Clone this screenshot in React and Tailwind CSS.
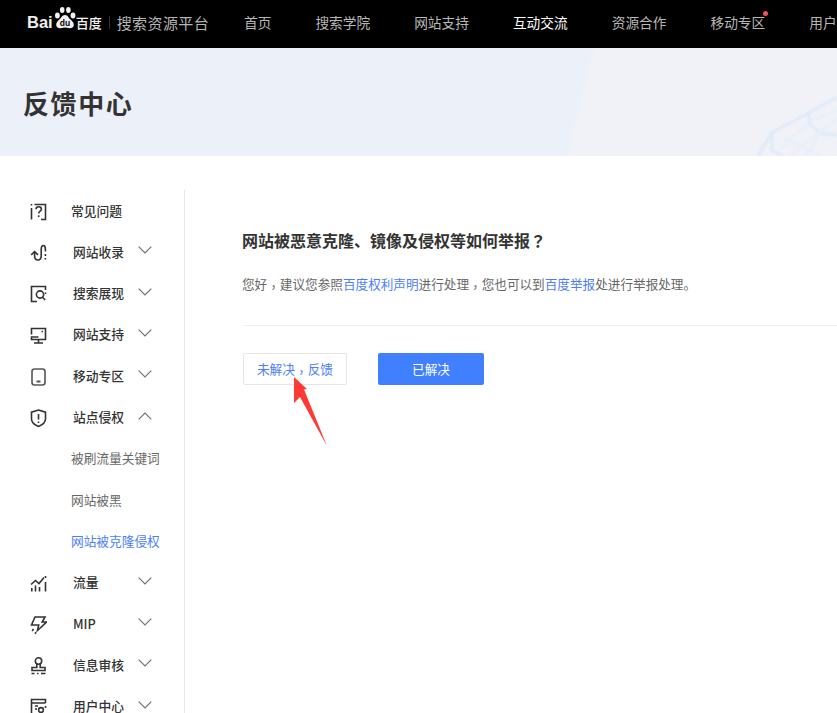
import React from "react";

const Chevron = ({ up }) => (
  <svg width="14" height="8" viewBox="0 0 14 8" fill="none" stroke="#6b7280" strokeWidth="1.2" className="block">
    {up ? <path d="M0.7 7.3 7 1l6.3 6.3" /> : <path d="M0.7 0.7 7 7l6.3-6.3" />}
  </svg>
);

const icons = {
  help: (
    <>
      <path d="M1.5 1v1.6M1.5 5v11.5M4.5 1.5h11v15H11" />
      <path d="M6 6.2c0-3.2 5.4-3.2 5.4 0 0 2-2.7 2-2.7 4.3" />
      <path d="M8.7 12.3v1.8" />
    </>
  ),
  link: (
    <>
      <path d="M1.2 10.8 4.6 7.6 8 10.8" />
      <path d="M4.6 8.2v3.6c0 5.6 6.6 5.6 6.6 0V5c0-4.6 4.2-4.6 4.2 0v2.6" />
      <path d="M15.4 10v2M15.4 14v1.5" />
    </>
  ),
  search: (
    <>
      <path d="M15.5 5V1.5H1.5v15H7" />
      <circle cx="10" cy="9.5" r="3.6" />
      <path d="m12.5 12.2 2.7 2.8M15.5 7.5v1.5" />
    </>
  ),
  monitor: (
    <>
      <path d="M1.5 7.5V1.5h14v11h-14V10h7" />
      <path d="M4 16h9M8.5 12.5V16M11.5 4.5h1.5" />
    </>
  ),
  phone: (
    <>
      <rect x="2" y="1" width="13" height="16" rx="2.5" stroke="#555" />
      <path d="M6.5 13.5h4" strokeWidth="2" stroke="#555" />
    </>
  ),
  shield: (
    <>
      <path d="M8.5 1 15.5 3.2V10c0 3.5-3.5 6-7 7.5-3.5-1.5-7-4-7-7.5V3.2z" />
      <path d="M8.5 5v5.5M8.5 12.5v1.5" />
    </>
  ),
  chart: (
    <>
      <path d="M1 10.5 5.5 6.5l3.5 3L14 3.5" />
      <path d="M1.8 14v3.5M5.5 11.5v6M9.5 13v4.5M15.5 8v9.5M15.5 2v2" />
    </>
  ),
  bolt: (
    <>
      <path d="M5 1h10l-2.8 5H16.5L7.5 14.5l1.2-5.5H1.5z" />
      <path d="M3.5 13 2.2 15M6 16.3l-1 1.5" />
    </>
  ),
  stamp: (
    <>
      <circle cx="8.5" cy="4" r="3.2" />
      <path d="M6.8 7v3.5H2v3h13v-3h-4.8V7" />
      <path d="M1.5 16.5h3M7 16.5h1.5M11 16.5h4.5" />
    </>
  ),
  user: (
    <>
      <path d="M1.5 17V1.5h14V5M1.5 5h14M5 8h3M5 11h2" />
      <circle cx="11" cy="12" r="2.4" />
      <path d="M15.5 8v2M7 16.5h1" />
    </>
  ),
};

const Icon = ({ name }) => (
  <svg width="17" height="19" viewBox="0 0 17 19" fill="none" stroke="#333" strokeWidth="1.6" className="block shrink-0">
    {icons[name]}
  </svg>
);

const Item = ({ icon, label, up, plain }) => (
  <div className="flex h-[41.3px] items-center">
    <span className="flex w-[30px] shrink-0 translate-y-[2px] justify-start">
      <Icon name={icon} />
    </span>
    <span className={`${plain ? "ml-[11px]" : "ml-[13px]"} w-[59px] shrink-0 text-[12.75px] font-medium text-[#333]`}>{label}</span>
    {!plain && (
      <span className="ml-[6px] -translate-y-[1px]">
        <Chevron up={up} />
      </span>
    )}
  </div>
);

const SubItem = ({ label, active }) => (
  <div className={`flex h-[41.3px] items-center pl-[41px] text-[12.7px] ${active ? "text-[#4d7ef7]" : "text-[#666]"}`}>{label}</div>
);

const Paw = () => (
  <svg width="24" height="24" viewBox="0 0 24 24" className="block shrink-0" fill="#f2f2f2">
    <ellipse cx="4.4" cy="9.5" rx="2.4" ry="2.9" />
    <ellipse cx="9.2" cy="4" rx="2.3" ry="3" />
    <ellipse cx="15.4" cy="4" rx="2.3" ry="3" />
    <ellipse cx="20" cy="9.5" rx="2.4" ry="2.9" />
    <path d="M12 9c-3 0-3.8 3-5.6 4.6C4.4 15.4 3 17 3.2 19c.2 2.5 2.6 3.6 4.6 3.2 1.6-.3 2.8-.7 4.2-.7s2.7.5 4.3.7c2.2.3 4.4-.9 4.5-3.3.1-2-1.4-3.6-3.4-5.3C15.6 12 15 9 12 9z" />
    <text x="12" y="20" textAnchor="middle" fontSize="8.5" fontWeight="700" fontFamily="Liberation Sans, sans-serif" fill="#000">du</text>
  </svg>
);

const nav = ["首页", "搜索学院", "网站支持", "互动交流", "资源合作", "移动专区", "用户中心"];

const Q = ({ children }) => <span className="font-['Noto_Sans_CJK_TC']">{children}</span>;
const Comma = () => <span className="inline-block translate-y-[3px] font-['Noto_Sans_CJK_TC']">，</span>;

export default function App() {
  return (
    <div
      className="h-[713px] w-[837px] overflow-hidden bg-white"
      style={{ fontFamily: '"Noto Sans CJK SC", "Liberation Sans", sans-serif' }}
    >
      <header className="flex h-12 items-center bg-black pb-[4px] pl-[27px]">
        <div className="flex w-[217px] shrink-0 items-center">
          <span className="font-['Liberation_Sans'] text-[16.5px] leading-none font-bold text-[#eeeeee]">Bai</span>
          <span className="-mt-[8px]">
            <Paw />
          </span>
          <span className="-ml-px text-[13px] leading-none font-medium text-[#f2f2f2]">百度</span>
          <span className="mx-[7px] h-[13px] w-px bg-[#333]" />
          <span className="text-[15px] leading-none tracking-[0.4px] text-[#b5b5b5]">搜索资源平台</span>
        </div>
        <nav className="flex gap-[44px] text-[13.7px] whitespace-nowrap">
          {nav.map((n) => (
            <a key={n} className={`relative ${n === "互动交流" ? "text-white" : "text-[#b8b8b8]"}`}>
              {n}
              {n === "移动专区" && <span className="absolute top-[-1px] right-[-3px] size-[5px] rounded-full bg-[#f55353]" />}
            </a>
          ))}
        </nav>
      </header>

      <section className="relative flex h-[108px] items-center overflow-hidden bg-[#ecf0f8] pl-[23px]">
        <svg className="absolute inset-0" width="837" height="108" viewBox="0 0 837 108" fill="none">
          <polygon points="594,0 837,0 837,108 567,108" fill="#f0f2f8" />
          <g className="blur-[1px]">
            <g stroke="#dce8f9" strokeWidth="2.5">
              <path d="M758 108 772 84 809 65 837 49" />
              <path d="M809 65 809 75 820 85 837 87M772 84 772 102 782 108" />
            </g>
            <g stroke="#e6eef9" strokeWidth="2">
              <path d="M780 100 809 75M790 108 837 70M812 72 837 62M785 90 820 108M820 85 806 108" />
            </g>
          </g>
        </svg>
        <h1 className="relative text-[26px] font-bold tracking-[1.6px] text-[#333]">反馈中心</h1>
      </section>

      <div className="flex pt-[33.5px]">
        <aside className="h-[523.5px] w-[185px] shrink-0 overflow-hidden border-r border-[#e8e8e8] pl-[30px]">
          <Item icon="help" label="常见问题" plain />
          <Item icon="link" label="网站收录" />
          <Item icon="search" label="搜索展现" />
          <Item icon="monitor" label="网站支持" />
          <Item icon="phone" label="移动专区" />
          <Item icon="shield" label="站点侵权" up />
          <SubItem label="被刷流量关键词" />
          <SubItem label="网站被黑" />
          <SubItem label="网站被克隆侵权" active />
          <Item icon="chart" label="流量" />
          <Item icon="bolt" label="MIP" />
          <Item icon="stamp" label="信息审核" />
          <Item icon="user" label="用户中心" />
        </aside>

        <main className="min-w-0 flex-1 pt-[38.5px] pl-[58px]">
          <h2 className="-ml-px text-[16px] leading-[24px] font-bold whitespace-nowrap text-[#333]">
            网站被恶意克隆、镜像及侵权等如何举报<Q>？</Q>
          </h2>
          <p className="mt-[22px] -ml-px text-[12.62px] leading-[20px] whitespace-nowrap text-[#666]">
            您好<Comma />建议您参照<a className="text-[#4d7ef7]">百度权利声明</a>进行处理<Comma />您也可以到<a className="text-[#4d7ef7]">百度举报</a>处进行举报处理。
          </p>
          <div className="mt-[31px] h-px bg-[#eeeeee]" />
          <div className="relative mt-[27px] flex gap-[31px]">
            <button className="h-[32px] w-[104px] rounded-[2px] border border-[#e6e6e6] bg-white text-[12.7px] text-[#4d7ef7]">
              未解决<Comma />反馈
            </button>
            <button className="h-[32px] w-[106px] rounded-[2px] bg-[#4080ff] text-[12.7px] text-white">已解决</button>
            <svg className="absolute top-[24px] left-[48px]" width="40" height="70" viewBox="0 0 40 70" fill="#ff3a35">
              <path d="M3 0 16 12 13 12.5 36 69 9 20 3 26z" />
            </svg>
          </div>
        </main>
      </div>
    </div>
  );
}
